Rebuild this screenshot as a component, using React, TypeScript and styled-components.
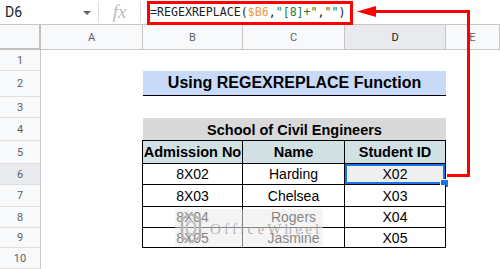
import styled, { createGlobalStyle } from 'styled-components'

const GlobalStyle = createGlobalStyle`
  body {
    margin: 0;
    background: #fff;
    overflow: hidden;
  }
`

const columns = ['A', 'B', 'C', 'D', 'E']
const rowHeights = [21, 26, 21, 23, 23, 21, 22, 21, 20, 21]

const students = [
  { id: '8X02', name: 'Harding', sid: 'X02' },
  { id: '8X03', name: 'Chelsea', sid: 'X03' },
  { id: '8X04', name: 'Rogers', sid: 'X04' },
  { id: '8X05', name: 'Jasmine', sid: 'X05' },
]

export default function App() {
  return (
    <Page>
      <GlobalStyle />
      <FormulaBar>
        <NameBox>
          <CellRef>D6</CellRef>
          <Caret />
        </NameBox>
        <Fx>fx</Fx>
        <Formula>
          =REGEXREPLACE(<Ref>$B6</Ref>,<Str>"[8]+"</Str>,<Str>""</Str>)
        </Formula>
      </FormulaBar>

      <Sheet>
        <Corner />
        {columns.map((c) => (
          <ColHead key={c} $active={c === 'D'}>
            {c}
          </ColHead>
        ))}

        {/* row 1 */}
        <RowHead>1</RowHead>
        <Blank $span={5} />

        {/* row 2 */}
        <RowHead>2</RowHead>
        <Blank />
        <Title>Using REGEXREPLACE Function</Title>
        <Blank />

        {/* row 3 */}
        <RowHead>3</RowHead>
        <Blank $span={5} />

        {/* row 4 */}
        <RowHead>4</RowHead>
        <Blank />
        <Caption>School of Civil Engineers</Caption>
        <Blank />

        {/* row 5 */}
        <RowHead>5</RowHead>
        <Blank />
        <HeadCell $first>Admission No</HeadCell>
        <HeadCell>Name</HeadCell>
        <HeadCell>Student ID</HeadCell>
        <Blank />

        {students.map((s, i) => (
          <Row key={s.id}>
            <RowHead $active={i === 0}>{6 + i}</RowHead>
            <Blank />
            <Cell $first>{s.id}</Cell>
            <Cell>{s.name}</Cell>
            <Cell $selected={i === 0}>
              {s.sid}
              {i === 0 && <FillHandle />}
            </Cell>
            <Blank />
          </Row>
        ))}

        {/* row 10 */}
        <RowHead>10</RowHead>
        <Blank $span={5} />
      </Sheet>

      <Watermark>
        <svg width="22" height="32" viewBox="0 0 22 32">
          <path
            d="M11 2 L20 7 L20 25 L11 30 L2 25 L2 7 Z"
            fill="none"
            stroke="#b5b5b5"
            strokeWidth="2.5"
          />
          <ellipse cx="11" cy="16" rx="4.5" ry="7" fill="none" stroke="#c4c4c4" strokeWidth="2.5" />
        </svg>
        <MarkText>OfficeWheel</MarkText>
      </Watermark>

      <Annotation width="500" height="269" viewBox="0 0 500 269">
        <rect x="148.5" y="2.5" width="203" height="21" fill="none" stroke="#f00" strokeWidth="3" />
        <path d="M447 175.5 H468.5 V11.5 H372" fill="none" stroke="#f00" strokeWidth="3" />
        <polygon points="357,11.5 376,6 376,17" fill="#f00" />
      </Annotation>
    </Page>
  )
}

const Page = styled.div`
  position: relative;
  width: 500px;
  height: 269px;
  overflow: hidden;
  font-family: Roboto, 'Liberation Sans', sans-serif;
`

const FormulaBar = styled.div`
  height: 24px;
  display: flex;
  align-items: center;
  border-bottom: 1px solid #c7c7c7;
  box-sizing: content-box;
`

const NameBox = styled.div`
  width: 99px;
  height: 20px;
  display: flex;
  align-items: center;
  justify-content: space-between;
  padding: 0 7px 0 5px;
  box-sizing: border-box;
  border-right: 1px solid #dadce0;
`

const CellRef = styled.span`
  font-size: 14px;
  color: #202124;
`

const Caret = styled.span`
  width: 0;
  height: 0;
  border-left: 4px solid transparent;
  border-right: 4px solid transparent;
  border-top: 4px solid #5f6368;
  margin-top: 2px;
`

const Fx = styled.div`
  width: 42px;
  height: 20px;
  display: flex;
  align-items: center;
  justify-content: center;
  border-right: 1px solid #dadce0;
  box-sizing: border-box;
  font-family: 'Liberation Serif', serif;
  font-style: italic;
  font-size: 19px;
  color: #bdbdbd;
`

const Formula = styled.div`
  padding-left: 9px;
  font-family: 'DejaVu Sans Mono', monospace;
  font-size: 11.6px;
  color: #202124;
  white-space: pre;
`

const Ref = styled.span`
  color: #f19a3e;
`

const Str = styled.span`
  color: #1b7a3e;
`

const Sheet = styled.div`
  display: grid;
  grid-template-columns: 41px 102px 100px 102px 101px 1fr;
  grid-template-rows: 25px ${rowHeights.map((h) => `${h}px`).join(' ')};
`

const Row = styled.div`
  display: contents;
`

const Corner = styled.div`
  background: #f8f9fa;
  border-right: 2px solid #c0c0c0;
  border-bottom: 2px solid #c0c0c0;
  box-sizing: border-box;
`

const ColHead = styled.div<{ $active?: boolean }>`
  display: flex;
  align-items: center;
  justify-content: center;
  background: ${(p) => (p.$active ? '#e8eaed' : '#f8f9fa')};
  border-right: 1px solid #c7c7c7;
  border-bottom: 1px solid #c7c7c7;
  font-size: 11px;
  color: ${(p) => (p.$active ? '#202124' : '#5f6368')};
`

const RowHead = styled.div<{ $active?: boolean }>`
  display: flex;
  align-items: center;
  justify-content: center;
  background: ${(p) => (p.$active ? '#e8eaed' : '#f8f9fa')};
  border-right: 1px solid #c7c7c7;
  border-bottom: 1px solid #e0e0e0;
  font-size: 11px;
  color: #5f6368;
`

const Blank = styled.div<{ $span?: number }>`
  grid-column: span ${(p) => p.$span ?? 1};
`

const Title = styled.div`
  grid-column: span 3;
  display: flex;
  align-items: center;
  justify-content: center;
  background: #c9daf8;
  border-bottom: 1px solid #000;
  margin-bottom: 1px;
  font-family: 'Liberation Sans', Arial, sans-serif;
  font-weight: 700;
  font-size: 16px;
  color: #000;
`

const Caption = styled.div`
  grid-column: span 3;
  display: flex;
  align-items: center;
  justify-content: center;
  background: #d9d9d9;
  font-family: 'Liberation Sans', Arial, sans-serif;
  font-weight: 700;
  font-size: 14.5px;
  color: #000;
`

const Cell = styled.div<{ $first?: boolean; $selected?: boolean }>`
  position: relative;
  display: flex;
  align-items: center;
  justify-content: center;
  border-right: 1px solid #000;
  border-bottom: 1px solid #000;
  border-left: ${(p) => (p.$first ? '1px solid #000' : 'none')};
  margin-left: ${(p) => (p.$first ? '-1px' : '0')};
  background: ${(p) => (p.$selected ? '#efefef' : '#fff')};
  box-shadow: ${(p) => (p.$selected ? 'inset 0 0 0 2px #1a73e8' : 'none')};
  font-family: 'Liberation Sans', Arial, sans-serif;
  font-size: 14px;
  color: #000;
`

const HeadCell = styled(Cell)`
  border-top: 1px solid #000;
  margin-top: -1px;
  background: #d0e0e3;
  font-weight: 700;
  font-size: 14.5px;
`

const FillHandle = styled.span`
  position: absolute;
  right: -4px;
  bottom: -4px;
  width: 7px;
  height: 7px;
  background: #1a73e8;
  border: 1px solid #fff;
`

const Watermark = styled.div`
  position: absolute;
  left: 175px;
  top: 209px;
  width: 148px;
  height: 38px;
  display: flex;
  align-items: center;
  gap: 8px;
  padding-left: 5px;
  box-sizing: border-box;
  background: rgba(235, 235, 235, 0.55);
`

const MarkText = styled.span`
  font-family: 'Liberation Serif', serif;
  font-size: 15px;
  letter-spacing: 3.2px;
  color: rgba(150, 150, 150, 0.7);
  margin-top: 2px;
`

const Annotation = styled.svg`
  position: absolute;
  left: 0;
  top: 0;
  pointer-events: none;
`
